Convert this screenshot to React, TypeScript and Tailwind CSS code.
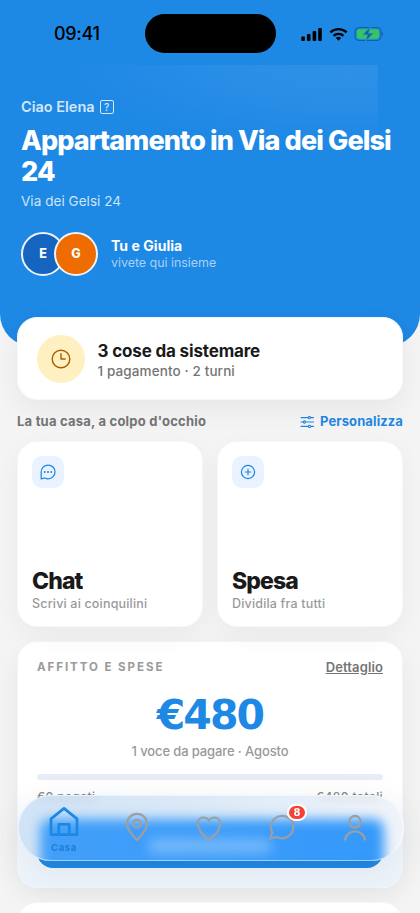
import type { ReactNode } from 'react';

type Tile = {
  title: string;
  subtitle: string;
  icon: ReactNode;
};

const tiles: Tile[] = [
  {
    title: 'Chat',
    subtitle: 'Scrivi ai coinquilini',
    icon: (
      <svg width="16" height="16" viewBox="0 0 16 16" fill="none" stroke="#1e88e5" strokeWidth="1.25" strokeLinejoin="round">
        <path d="M1.2 14.8V8A6.9 6.9 0 1 1 8 14.8c-1.2 0-2.2-.3-3.2-.8z" />
        <path d="M4.7 8h.1M7.9 8h.2M11.2 8h.1" strokeWidth="1.8" strokeLinecap="round" />
      </svg>
    ),
  },
  {
    title: 'Spesa',
    subtitle: 'Dividila fra tutti',
    icon: (
      <svg width="16" height="16" viewBox="0 0 16 16" fill="none" stroke="#1e88e5" strokeWidth="1.2" strokeLinecap="round">
        <circle cx="8" cy="8" r="6.6" />
        <path d="M8 5.2v5.6M5.2 8h5.6" />
      </svg>
    ),
  },
];

function StatusBar() {
  return (
    <div className="flex h-[65px] items-start pt-[14px]">
      <span className="w-[144.5px] pl-[54px] pt-[7px] text-[18px] font-medium leading-[26px] tracking-[-0.3px] text-black">09:41</span>
      <div className="h-[39px] w-[131px] rounded-full bg-black" />
      <div className="flex items-center pl-[25px] pt-[12px]">
        <svg width="21" height="15" viewBox="0 0 21 15" fill="#000">
          <rect x="0.3" y="9.5" width="3.6" height="4.5" rx="1" />
          <rect x="5.9" y="7" width="3.6" height="7" rx="1" />
          <rect x="11.6" y="4" width="3.6" height="10" rx="1" />
          <rect x="17.2" y="1" width="3.6" height="13" rx="1" />
        </svg>
        <svg className="ml-[7px]" width="19" height="15" viewBox="0 0 19 15" fill="none" stroke="#000" strokeWidth="2.3">
          <path d="M1.4 5.3a11.7 11.7 0 0 1 16.2 0" />
          <path d="M4.5 8.8a7.3 7.3 0 0 1 10 0" />
          <path d="M6.8 11.1a4 4 0 0 1 5.4 0L9.5 13.8z" fill="#000" stroke="none" />
        </svg>
        <svg className="ml-[6px]" width="30" height="16" viewBox="0 0 30 16">
          <rect x="1" y="1.5" width="26" height="13" rx="4.3" fill="none" stroke="#155fa0" strokeWidth="1.1" />
          <rect x="2.9" y="3.3" width="22.2" height="9.4" rx="2.6" fill="#34c759" />
          <path d="M28.2 6.1c1.3.6 1.3 3.3 0 3.9z" fill="#155fa0" />
          <path d="M16.5 0.8L8.7 8.8h4.8L11.5 15.2l7.8-8h-4.8z" fill="#155fa0" stroke="#2f9fc0" strokeWidth="0.7" />
        </svg>
      </div>
    </div>
  );
}

function Header() {
  return (
    <header className="relative h-[346px] overflow-hidden rounded-b-[32px] bg-[#1e88e5]">
      {/* soft glow behind the greeting */}
      <div className="absolute left-[78px] top-[65px] h-[120px] w-[300px] bg-[radial-gradient(ellipse_280px_80px_at_270px_0px,rgba(255,255,255,0.075),rgba(255,255,255,0.05)_45%,transparent)]" />
      <div className="relative">
        <StatusBar />
        <div className="pl-[21px] pt-[32px]">
          <div className="flex items-center gap-[5px]">
            <span className="text-[14.5px] font-semibold leading-[20px] text-[#d2e7fa]">Ciao Elena</span>
            <span className="flex h-[14px] w-[14px] items-center justify-center rounded-[2px] border border-[#d2e7fa] text-[10px] font-medium leading-none text-[#d2e7fa]">?</span>
          </div>
          <h1 className="mt-[8px] text-[27px] font-extrabold leading-[31px] tracking-[-0.9px] text-white">
            Appartamento in Via dei Gelsi
            <br />
            24
          </h1>
          <p className="mt-[4px] text-[13.5px] leading-[20px] tracking-[0.05px] text-[#cfe5f9]">Via dei Gelsi 24</p>
          <div className="mt-[21px] flex items-center">
            <span className="flex h-[44px] w-[44px] items-center justify-center rounded-full border-[2.5px] border-[#eef3f8] bg-[#1565c0] text-[12.5px] font-extrabold text-white">E</span>
            <span className="-ml-[11px] flex h-[44px] w-[44px] items-center justify-center rounded-full border-[2.5px] border-[#eef3f8] bg-[#ef6c00] text-[12.5px] font-extrabold text-white">G</span>
            <div className="ml-[13px]">
              <p className="text-[14px] font-bold leading-[17px] tracking-[0.05px] text-white">Tu e Giulia</p>
              <p className="text-[12.5px] leading-[17px] tracking-[-0.05px] text-[#a9d0f5]">vivete qui insieme</p>
            </div>
          </div>
        </div>
      </div>
    </header>
  );
}

function TodoCard() {
  return (
    <div className="relative -mt-[29px] flex h-[83px] items-center rounded-[20px] border border-[#f4f8fc] bg-white pl-[18.5px] shadow-[0_10px_28px_rgba(0,0,0,0.055)]">
      <div className="flex h-[48px] w-[48px] items-center justify-center rounded-full bg-[#fff0c2]">
        <svg width="20" height="20" viewBox="0 0 20 20" fill="none" stroke="#a65f00" strokeWidth="1.4" strokeLinecap="round" strokeLinejoin="round">
          <circle cx="10" cy="10" r="8.8" />
          <path d="M10 4.6V10h4.2" />
        </svg>
      </div>
      <div className="ml-[13px] pt-[3px]">
        <p className="text-[17px] font-bold leading-[22px] tracking-[-0.16px] text-[#1a1a1a]">3 cose da sistemare</p>
        <p className="text-[13.5px] font-medium leading-[19px] tracking-[0.12px] text-[#757575]">1 pagamento · 2 turni</p>
      </div>
    </div>
  );
}

function RentCard() {
  return (
    <div className="mt-[14px] h-[247px] rounded-[20px] border border-[#f2f6fb] bg-gradient-to-b from-white from-60% to-[#edf4fc] px-[19px] pt-[15px] shadow-[0_10px_28px_rgba(0,0,0,0.055)]">
      <div className="flex items-center justify-between">
        <span className="text-[11.5px] font-bold leading-[20px] tracking-[1.95px] text-[#9a9a9a]">AFFITTO E SPESE</span>
        <span className="text-[13px] font-semibold leading-[20px] tracking-[0.12px] text-[#757575] underline">Dettaglio</span>
      </div>
      <p className="mt-[13px] text-center font-['DejaVu_Sans',sans-serif] text-[41px] font-bold leading-[50px] tracking-[-1.9px] text-[#1e88e5]">€480</p>
      <p className="mt-[1px] text-center text-[13px] font-medium leading-[20px] tracking-[-0.12px] text-[#999]">1 voce da pagare · Agosto</p>
      <div className="mt-[13px] h-[6px] rounded-full bg-[#e6edf6]" />
      <div className="mt-[9px] flex justify-between text-[12px] font-medium leading-[16px] tracking-[0.4px] text-[#888]">
        <span>€0 pagati</span>
        <span>€480 totali</span>
      </div>
      <div className="mt-[12px] h-[51px] rounded-[16px] bg-[#1e88e5]" />
    </div>
  );
}

function BottomNav() {
  return (
    <nav className="fixed left-[17.5px] top-[795px] h-[66px] w-[386px] rounded-full shadow-[0_10px_34px_rgba(40,70,100,0.1)]">
      <div className="absolute inset-0 overflow-hidden rounded-full bg-gradient-to-r from-[#d0e3f6] via-[#dceaf7] to-[#f0f4f9]">
        <div className="absolute left-[22px] top-[24px] h-[80px] w-[344px] rounded-[10px] bg-gradient-to-r from-[#429ff9] to-[#3499fa] blur-[6px]" />
        <div className="absolute left-[130px] top-[43px] h-[16px] w-[124px] rounded-full bg-white/28 blur-[6px]" />
        <div className="absolute left-[22px] top-[1px] h-[4px] w-[56px] bg-[#888]/15 blur-[4px]" />
        <div className="absolute left-[302px] top-[1px] h-[4px] w-[60px] bg-[#888]/15 blur-[4px]" />
      </div>
      <div className="relative flex h-full rounded-full border border-white/50 pl-[9px] pr-[11px]">
        <div className="flex flex-1 flex-col items-center pt-[10px]">
          <svg width="32" height="32" viewBox="0 0 32 32" fill="none" stroke="#1e88e5" strokeWidth="2.8" strokeLinejoin="round">
            <path d="M3 12.8L16 2.4l13 10.4v15.8H3z" />
            <path d="M10.8 28.6V18.4h10.4v10.2" />
          </svg>
          <span className="mt-[3px] text-[9.5px] font-bold leading-[13px] tracking-[0.6px] text-[#1a7ed9]">Casa</span>
        </div>
        <div className="flex flex-1 justify-center pt-[16px]">
          <svg width="24" height="30" viewBox="0 0 24 30" fill="none" stroke="#9b9fa5" strokeWidth="2.3" strokeLinejoin="round">
            <path d="M12 28C8 23.8 2 18 2 11.8a10 10 0 0 1 20 0C22 18 16 23.8 12 28z" />
            <circle cx="12" cy="11.7" r="3.8" />
          </svg>
        </div>
        <div className="flex flex-1 justify-center pt-[19px]">
          <svg width="28" height="27" viewBox="0 0 28 27" fill="none" stroke="#9b9fa5" strokeWidth="2.2" strokeLinejoin="round">
            <path d="M14 25C8 19.7 2.8 15.2 2.8 8.8 2.8 4.8 5.3 2.5 8.3 2.5 11 2.5 13 3.7 14 5.8 15 3.7 17 2.5 19.7 2.5c3 0 5.5 2.3 5.5 6.3C25.2 15.2 20 19.7 14 25z" />
          </svg>
        </div>
        <div className="relative flex flex-1 justify-center pt-[17px]">
          <svg width="28" height="28" viewBox="0 0 28 28" fill="none" stroke="#9b9fa5" strokeWidth="2.2" strokeLinejoin="round">
            <path d="M2.4 25.5L4.2 19.2A11.2 11.2 0 1 1 9 24z" />
          </svg>
          <span className="absolute left-[41px] top-[8px] flex h-[17px] w-[20px] items-center justify-center rounded-full border-2 border-white bg-[#f44336] font-['DejaVu_Sans',sans-serif] text-[10px] font-bold leading-none text-white">8</span>
        </div>
        <div className="flex flex-1 justify-center pt-[18px]">
          <svg width="26" height="28" viewBox="0 0 26 28" fill="none" stroke="#9b9fa5" strokeWidth="2.3" strokeLinecap="round">
            <circle cx="13" cy="7.8" r="5.8" />
            <path d="M3 25.5a10.2 10.2 0 0 1 20 0" />
          </svg>
        </div>
      </div>
    </nav>
  );
}

export default function App() {
  return (
    <div className="h-[913px] w-[420px] overflow-hidden bg-[#f4f4f4] font-['Inter',sans-serif]">
      <Header />
      <main className="px-[17px]">
        <TodoCard />
        <div className="mt-[12px] flex h-[20px] items-center justify-between text-[13px] font-bold">
          <span className="tracking-[0.22px] text-[#757575]">La tua casa, a colpo d'occhio</span>
          <span className="flex items-center gap-[6px] tracking-[0.1px] text-[#1e88e5]">
            <svg width="14" height="12" viewBox="0 0 14 12" fill="#f0f1f2" stroke="#1e88e5" strokeWidth="1.1" strokeLinecap="round">
              <path d="M1 1.6h12.5M1 6h12.5M1 10.4h12.5" />
              <circle cx="9.4" cy="1.6" r="1.1" />
              <circle cx="4.4" cy="6" r="1.1" />
              <circle cx="9.4" cy="10.4" r="1.1" />
            </svg>
            Personalizza
          </span>
        </div>
        <div className="mt-[9px] grid grid-cols-2 gap-[14px]">
          {tiles.map(t => (
            <div key={t.title} className="flex h-[186px] flex-col rounded-[20px] border border-[#f4f8fc] bg-white px-[14px] pt-[14px] shadow-[0_8px_26px_rgba(0,0,0,0.045)]">
              <div className="flex h-[32px] w-[32px] items-center justify-center rounded-[10px] bg-[#e9f2fe]">{t.icon}</div>
              <p className="mt-[79px] text-[23px] font-extrabold leading-[28px] tracking-[-0.9px] text-[#1a1a1a]">{t.title}</p>
              <p className="mt-[1px] text-[12.5px] font-medium leading-[16px] tracking-[0.18px] text-[#9a9a9a]">{t.subtitle}</p>
            </div>
          ))}
        </div>
        <RentCard />
        <div className="mt-[14px] h-[60px] rounded-[20px] border border-[#f2f6fb] bg-white" />
      </main>
      <BottomNav />
    </div>
  );
}
